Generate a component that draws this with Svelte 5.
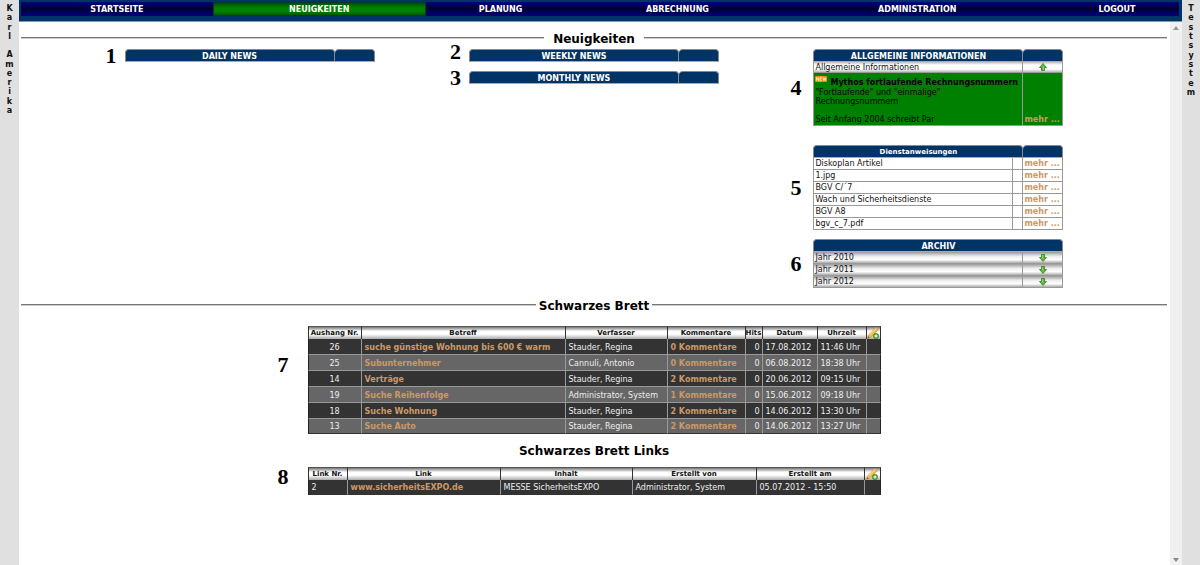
<script>

	let active = $state("NEUIGKEITEN");

	const menu = [
		{name: "STARTSEITE", size: "m1"},
		{name: "NEUIGKEITEN", size: "m2"},
		{name: "PLANUNG", size: "m3"},
		{name: "ABRECHNUNG", size: "m4"},
		{name: "ADMINISTRATION", size: "m5"},
		{name: "LOGOUT", size: "m6"}
	];

	const user = "Karl Amerika";
	const system = "Testsystem";

	const instructions = ["Diskoplan Artikel", "1.jpg", "BGV C/´7", "Wach und Sicherheitsdienste", "BGV A8", "bgv_c_7.pdf"];
	const years = [2010, 2011, 2012];

	const board = [
		{nr: 26, title: "suche günstige Wohnung bis 600 € warm", author: "Stauder, Regina", comments: 0, hits: 0, date: "17.08.2012", time: "11:46 Uhr"},
		{nr: 25, title: "Subunternehmer", author: "Cannuli, Antonio", comments: 0, hits: 0, date: "06.08.2012", time: "18:38 Uhr"},
		{nr: 14, title: "Verträge", author: "Stauder, Regina", comments: 2, hits: 0, date: "20.06.2012", time: "09:15 Uhr"},
		{nr: 19, title: "Suche Reihenfolge", author: "Administrator, System", comments: 1, hits: 0, date: "15.06.2012", time: "09:18 Uhr"},
		{nr: 18, title: "Suche Wohnung", author: "Stauder, Regina", comments: 2, hits: 0, date: "14.06.2012", time: "13:30 Uhr"},
		{nr: 13, title: "Suche Auto", author: "Stauder, Regina", comments: 2, hits: 0, date: "14.06.2012", time: "13:27 Uhr"}
	];

	const links = [
		{nr: 2, url: "www.sicherheitsEXPO.de", content: "MESSE SicherheitsEXPO", author: "Administrator, System", created: "05.07.2012 - 15:50"}
	];

</script>

{#snippet arrow(up)}
	<svg class="arrow" class:up viewBox="0 0 8 8" aria-hidden="true">
		<path d="M2.5 .5h3v3h2L4 7.5 .5 3.5h2z" fill="#66b840" stroke="#2f7d1c" stroke-width=".8" stroke-linejoin="round" />
		<path d="M3.4 1.2v3" stroke="#a8dc88" stroke-width=".8" />
	</svg>
{/snippet}

{#snippet pencil()}
	<button class="icon" aria-label="Neuer Eintrag">
		<svg class="pencil" viewBox="0 0 12 12" aria-hidden="true">
			<path d="M.6 11.2 1.9 7.6 8.6 1l2.6 1.9-7 7.1z" fill="#f2bb4c" stroke="#cf8b2c" stroke-width=".6" />
			<path d="M2.6 8 9 1.7" stroke="#ffe6a0" stroke-width="1" />
			<path d="M8.6 1 9.6.3l2 1.6-.5 1z" fill="#e8a08c" />
			<path d="M.6 11.2l.6-1.9 1.3 1.2z" fill="#7a4a20" />
			<circle cx="9" cy="9" r="2.7" fill="#4fa336" stroke="#2d7a1d" stroke-width=".5" />
			<path d="M9 7.4v3.2M7.4 9h3.2" stroke="#fff" stroke-width="1" />
		</svg>
	</button>
{/snippet}

{#snippet rail(text)}
	<div class="letters" class:long={text.length > 10}>
		{#each text as letter}
			<span>{letter}</span>
		{/each}
	</div>
{/snippet}

{#snippet emptyPanel(nr, title, raised)}
	<section class="block">
		<span class="mark" class:raised>{nr}</span>
		<table class="panel">
			<thead>
				<tr><th>{title}</th><th class="more"></th></tr>
			</thead>
		</table>
	</section>
{/snippet}

<div class="page">
	<aside class="rail">{@render rail(user)}</aside>

	<div class="main">
		<header>
			<nav>
				{#each menu as item}
					<a href="#{item.name.toLowerCase()}" class={item.size} class:active={active == item.name} onclick={() => active = item.name}>{item.name}</a>
				{/each}
			</nav>
		</header>

		<div class="view">
			<main>
				<h2 class="ruled news">Neuigkeiten</h2>

				<div class="columns">
					<div class="column">
						{@render emptyPanel(1, "DAILY NEWS", false)}
					</div>

					<div class="column">
						{@render emptyPanel(2, "WEEKLY NEWS", true)}
						{@render emptyPanel(3, "MONTHLY NEWS", false)}
					</div>

					<div class="column">
						<section class="block info">
							<span class="mark far">4</span>
							<table class="panel">
								<thead>
									<tr><th>ALLGEMEINE INFORMATIONEN</th><th class="more"></th></tr>
								</thead>
								<tbody>
									<tr class="bar">
										<td>Allgemeine Informationen</td>
										<td><button class="icon" aria-label="Zuklappen">{@render arrow(true)}</button></td>
									</tr>
									<tr class="green">
										<td>
											<div class="headline">
												<svg class="new" viewBox="0 0 12 6" aria-hidden="true">
													<rect width="12" height="6" rx="1" fill="#f08c14" />
													<path d="M1.5 4.7V1.4l2 3.3V1.4M6.8 1.4H5v3.3h1.8M5 3h1.6M8 1.4l.6 3.2.8-2.4.8 2.4.6-3.2" fill="none" stroke="#fff2b8" stroke-width=".8" />
												</svg>
												<b>Mythos fortlaufende Rechnungsnummern</b>
											</div>
											"Fortlaufende" und "einmalige"<br>Rechnungsnummern<br><br>Seit Anfang 2004 schreibt Par
										</td>
										<td class="bottom"><a href="#mythos">mehr ...</a></td>
									</tr>
								</tbody>
							</table>
						</section>

						<section class="block">
							<span class="mark far">5</span>
							<table class="panel">
								<colgroup><col><col class="gap"><col class="more"></colgroup>
								<thead>
									<tr class="small"><th colspan="2">Dienstanweisungen</th><th></th></tr>
								</thead>
								<tbody>
									{#each instructions as name}
										<tr class="doc">
											<td>{name}</td>
											<td></td>
											<td><a href="#dokument">mehr ...</a></td>
										</tr>
									{/each}
								</tbody>
							</table>
						</section>

						<section class="block">
							<span class="mark far">6</span>
							<table class="panel">
								<colgroup><col><col class="more"></colgroup>
								<thead>
									<tr><th colspan="2">ARCHIV</th></tr>
								</thead>
								<tbody>
									{#each years as year}
										<tr class="bar year">
											<td>Jahr {year}</td>
											<td><button class="icon" aria-label="Aufklappen">{@render arrow(false)}</button></td>
										</tr>
									{/each}
								</tbody>
							</table>
						</section>
					</div>
				</div>

				<h2 class="ruled board-title">Schwarzes Brett</h2>

				<section class="block wide">
					<span class="mark outer">7</span>
					<table class="list board">
						<thead>
							<tr class="small">
								<th>Aushang Nr.</th><th>Betreff</th><th>Verfasser</th><th>Kommentare</th>
								<th>Hits</th><th>Datum</th><th>Uhrzeit</th><th>{@render pencil()}</th>
							</tr>
						</thead>
						<tbody>
							{#each board as row}
								<tr>
									<td class="center">{row.nr}</td>
									<td><a href="#aushang-{row.nr}">{row.title}</a></td>
									<td>{row.author}</td>
									<td><a href="#kommentare-{row.nr}">{row.comments} Kommentare</a></td>
									<td class="right">{row.hits}</td>
									<td>{row.date}</td>
									<td>{row.time}</td>
									<td></td>
								</tr>
							{/each}
						</tbody>
					</table>
				</section>

				<h2 class="links-title">Schwarzes Brett Links</h2>

				<section class="block wide">
					<span class="mark outer">8</span>
					<table class="list links">
						<thead>
							<tr class="small">
								<th>Link Nr.</th><th>Link</th><th>Inhalt</th><th>Erstellt von</th><th>Erstellt am</th><th>{@render pencil()}</th>
							</tr>
						</thead>
						<tbody>
							{#each links as link}
								<tr>
									<td>{link.nr}</td>
									<td><a href="#link-{link.nr}">{link.url}</a></td>
									<td>{link.content}</td>
									<td>{link.author}</td>
									<td>{link.created}</td>
									<td></td>
								</tr>
							{/each}
						</tbody>
					</table>
				</section>
			</main>

			<div class="scroll">
				<svg viewBox="0 0 6 4" aria-hidden="true"><path d="M0 4 3 0l3 4z" fill="#999" /></svg>
				<svg viewBox="0 0 6 4" aria-hidden="true"><path d="M0 0h6L3 4z" fill="#888" /></svg>
			</div>
		</div>
	</div>

	<aside class="rail system">{@render rail(system)}</aside>
</div>

<style>
	:global(body){
		margin:0;
		background-color:#fff;
	}

	.page, .page *{
		box-sizing:border-box;
	}

	.page{
		display:flex;
		min-height:100vh;
		font-family:"DejaVu Sans", Verdana, sans-serif;
		font-size:8px;
		line-height:9px;
		color:#111;
	}

	.rail{
		width:19px;
		flex:none;
		background-color:#e0e0e0;
		font-weight:bold;
		padding-top:4px;
	}

	.rail.system{
		width:18px;
	}

	.letters{
		display:flex;
		flex-direction:column;
		justify-content:space-between;
		align-items:center;
		height:93px;
	}

	.letters.long{
		height:111px;
	}

	.letters span{
		height:9px;
	}

	.main{
		flex:1;
		min-width:0;
		display:flex;
		flex-direction:column;
	}

	header{
		padding:2px 3px 5px 2px;
		background-color:#036;
		border-bottom:1px solid #7f99b2;
	}

	nav{
		display:flex;
		height:14px;
		background:linear-gradient(#000080, #000033 50%, #000080);
	}

	nav a{
		display:flex;
		align-items:center;
		justify-content:center;
		padding-top:1px;
		color:#fff;
		font-weight:bold;
		text-decoration:none;
	}

	nav a.active{
		background:linear-gradient(#004d00, #008000 40%, #008000 70%, #005a00);
		border:1px solid #003c28;
	}

	.m1{ flex:192; }
	.m2{ flex:211; }
	.m3{ flex:150; }
	.m4{ flex:204; }
	.m5{ flex:276; }
	.m6{ flex:124; }

	.view{
		flex:1;
		display:flex;
	}

	main{
		flex:1;
		min-width:0;
		padding:9px 3px 0 2px;
	}

	.scroll{
		width:12px;
		flex:none;
		display:flex;
		flex-direction:column;
		justify-content:space-between;
		align-items:center;
		padding:4px 0 3px;
		background-color:#f0f0f0;
	}

	.scroll svg{
		width:6px;
		height:4px;
	}

	h2{
		margin:0;
		font-size:12px;
		line-height:16px;
		text-align:center;
		color:#000;
	}

	.ruled{
		display:flex;
		gap:3px;
	}

	.ruled.news{
		gap:9px;
	}

	.ruled::before, .ruled::after{
		content:"";
		flex:1;
		height:0;
		margin-top:6px;
		border-top:1px solid #777;
		border-bottom:1px solid #ccc;
	}

	.columns{
		display:grid;
		grid-template-columns:repeat(3, 1fr);
		column-gap:2px;
		width:90%;
		margin:2px auto 0;
	}

	.column{
		display:flex;
		flex-direction:column;
		align-items:center;
		gap:9px;
	}

	.block{
		position:relative;
		width:250px;
	}

	.block.info{
		margin-bottom:10px;
	}

	.block.wide{
		width:50%;
		margin:0 auto;
	}

	/* section numbers hang in the margin left of each block */
	.mark{
		position:absolute;
		top:50%;
		right:calc(100% + 8px);
		transform:translateY(-50%);
		font-family:"Liberation Serif", "Times New Roman", serif;
		font-weight:bold;
		font-size:22px;
		line-height:20px;
		color:#000;
	}

	.mark.raised{
		top:25%;
	}

	.mark.far{
		right:calc(100% + 12px);
	}

	.mark.outer{
		top:36%;
		right:calc(100% + 19px);
	}

	table{
		width:100%;
		table-layout:fixed;
		border-collapse:separate;
		border-spacing:0;
	}

	th, td{
		padding:0;
		white-space:nowrap;
	}

	.small{
		font-size:7px;
	}

	a{
		font-weight:bold;
		text-decoration:none;
		color:#c96;
	}

	.icon{
		display:block;
		margin:0 auto;
		padding:0;
		border:0;
		background:none;
		cursor:pointer;
	}

	.panel th{
		height:13px;
		padding-top:1px;
		color:#fff;
		background-color:#036;
		border:1px solid #8a8a8a;
		border-bottom-color:#aaa;
		border-radius:4px 4px 0 0;
	}

	.panel th + th{
		border-left:0;
	}

	.more{
		width:40px;
	}

	.gap{
		width:10px;
	}

	.panel td{
		border-right:1px solid #999;
		border-bottom:1px solid #999;
	}

	.panel td:first-child{
		border-left:1px solid #999;
		padding-left:1px;
	}

	.bar td{
		height:11px;
		background:linear-gradient(#bbb, #fff 30%, #fff 70%, #bbb);
	}

	.bar.year td{
		height:12px;
		background:linear-gradient(#999, #eee 40%, #fff 70%, #aaa);
	}

	.arrow{
		display:block;
		width:8px;
		height:8px;
	}

	.arrow.up{
		transform:rotate(180deg);
	}

	.green td{
		background-color:#008000;
		padding-bottom:1px;
		color:#000;
	}

	.green .bottom{
		vertical-align:bottom;
		padding-left:1px;
	}

	.headline{
		display:flex;
		align-items:flex-start;
		gap:3px;
		height:15px;
		padding-top:3px;
	}

	.headline b{
		padding-top:2px;
	}

	.new{
		width:12px;
		height:6px;
	}

	.doc td{
		height:12px;
		padding-left:1px;
	}

	.list th{
		height:13px;
		padding-top:1px;
		color:#111;
		background:linear-gradient(#777, #fff 35%, #fff 60%, #aaa);
		border-right:1px solid #333;
		border-top:1px solid #555;
	}

	.list th:last-child{
		padding-top:0;
	}

	.list th:first-child{
		border-left:1px solid #333;
	}

	.list td{
		height:16px;
		padding:1px 0 0 3px;
		color:#eee;
		background-color:#333;
		border-right:1px solid #999;
		border-bottom:1px solid #999;
	}

	.list td:first-child{
		border-left:1px solid #222;
	}

	.list td:last-child{
		border-right-color:#222;
	}

	.list tr:nth-child(even) td{
		background-color:#666;
	}

	.list tr:last-child td{
		height:15px;
		border-bottom-color:#333;
	}

	.list .center{
		text-align:center;
		padding-left:0;
	}

	.list .right{
		text-align:right;
		padding:1px 2px 0 0;
	}

	.pencil{
		display:block;
		width:12px;
		height:12px;
	}

	.board th:nth-child(1){ width:54px; }
	.board th:nth-child(3){ width:102px; }
	.board th:nth-child(4){ width:78px; }
	.board th:nth-child(5){ width:17px; }
	.board th:nth-child(6){ width:55px; }
	.board th:nth-child(7){ width:49px; }
	.board th:nth-child(8){ width:14px; }

	.links th:nth-child(1){ width:40px; }
	.links th:nth-child(3){ width:132px; }
	.links th:nth-child(4){ width:124px; }
	.links th:nth-child(5){ width:108px; }
	.links th:nth-child(6){ width:16px; }

	.board-title{
		margin:10px 0 12px;
	}

	.links-title{
		margin:9px 0 8px;
	}
</style>
